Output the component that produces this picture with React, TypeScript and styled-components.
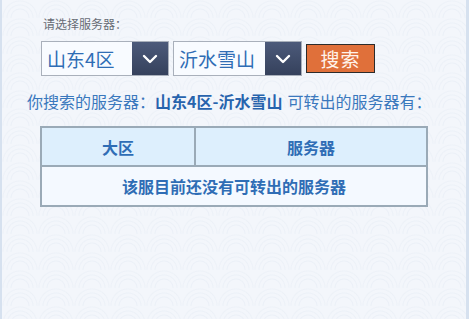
import styled, { createGlobalStyle } from "styled-components";

const GlobalStyle = createGlobalStyle`
  html, body {
    margin: 0;
    padding: 0;
  }
  body {
    font-family: "Noto Sans CJK SC", "Noto Sans", sans-serif;
  }
`;

const Page = styled.div`
  width: 469px;
  height: 319px;
  box-sizing: border-box;
  border-left: 2px solid #d6e1ef;
  border-right: 3px solid #d6e1ef;
  padding: 17px 0 0 25px;
  background-color: #f3f6fb;
  background-image:
    radial-gradient(circle at 50% 100%, transparent 8px, rgba(225, 232, 242, 0.45) 9px, transparent 10px, transparent 12px, rgba(225, 232, 242, 0.4) 13px, transparent 14px, transparent 16px, rgba(225, 232, 242, 0.35) 17px, transparent 18px);
  background-size: 36px 18px;
  display: flex;
  flex-direction: column;
`;

const Form = styled.div`
  margin-left: 14px;
  display: flex;
  flex-direction: column;
`;

const Label = styled.div`
  font-size: 12px;
  line-height: 14px;
  color: #676c75;
  margin-left: 2px;
`;

const Row = styled.div`
  margin-top: 10px;
  display: flex;
  align-items: center;
  gap: 4px;
`;

const Select = styled.div<{ $w: number }>`
  width: ${({ $w }) => $w}px;
  height: 35px;
  box-sizing: border-box;
  border: 1px solid #a9b0bb;
  display: flex;
  background: #f8fbff;
`;

const SelectValue = styled.div`
  flex: 1;
  font-size: 19px;
  line-height: 33px;
  color: #2f6db5;
  padding-left: 5px;
  white-space: nowrap;
`;

const Arrow = styled.div`
  width: 36px;
  flex-shrink: 0;
  background: linear-gradient(#4c5a7a, #35415c);
  display: flex;
  align-items: center;
  justify-content: center;
`;

const SearchButton = styled.button`
  width: 69px;
  height: 29px;
  box-sizing: border-box;
  border: 1px solid #2b2b2b;
  background: #e0703a;
  color: #fff3ea;
  font-family: "Noto Sans CJK SC", sans-serif;
  font-size: 19px;
  line-height: 25px;
  padding: 0;
  letter-spacing: 1px;
`;

const Result = styled.div`
  margin-top: 15px;
  font-size: 16px;
  line-height: 20px;
  color: #3a78bd;
  white-space: nowrap;
`;

const Strong = styled.b`
  color: #2763ad;
  font-weight: 700;
  margin-right: 5px;
`;

const Table = styled.table`
  margin: 15px 0 0 13px;
  width: 388px;
  border-collapse: collapse;
  border: 2px solid #9aaab7;
  color: #2f6db5;
  font-size: 16px;
  font-weight: 700;
`;

const Head = styled.th<{ $w?: number }>`
  height: 37px;
  ${({ $w }) => ($w ? `width: ${$w}px;` : "")}
  background: #ddeffd;
  border: 2px solid #9aaab7;
  font-weight: 700;
  padding: 0;
`;

const Cell = styled.td`
  height: 38px;
  background: #f4f9ff;
  text-align: center;
  padding: 0;
`;

const Chevron = () => (
  <svg width="16" height="10" viewBox="0 0 16 10">
    <path d="M2 2 L8 8 L14 2" fill="none" stroke="#fff" strokeWidth="2.4" strokeLinecap="round" strokeLinejoin="round" />
  </svg>
);

export default function App() {
  return (
    <>
      <GlobalStyle />
      <Page>
        <Form>
          <Label>请选择服务器：</Label>
          <Row>
            <Select $w={128}>
              <SelectValue>山东4区</SelectValue>
              <Arrow>
                <Chevron />
              </Arrow>
            </Select>
            <Select $w={129}>
              <SelectValue>沂水雪山</SelectValue>
              <Arrow>
                <Chevron />
              </Arrow>
            </Select>
            <SearchButton>搜索</SearchButton>
          </Row>
        </Form>
        <Result>
          你搜索的服务器：<Strong>山东4区-沂水雪山</Strong>可转出的服务器有：
        </Result>
        <Table>
          <thead>
            <tr>
              <Head $w={152}>大区</Head>
              <Head>服务器</Head>
            </tr>
          </thead>
          <tbody>
            <tr>
              <Cell colSpan={2}>该服目前还没有可转出的服务器</Cell>
            </tr>
          </tbody>
        </Table>
      </Page>
    </>
  );
}
